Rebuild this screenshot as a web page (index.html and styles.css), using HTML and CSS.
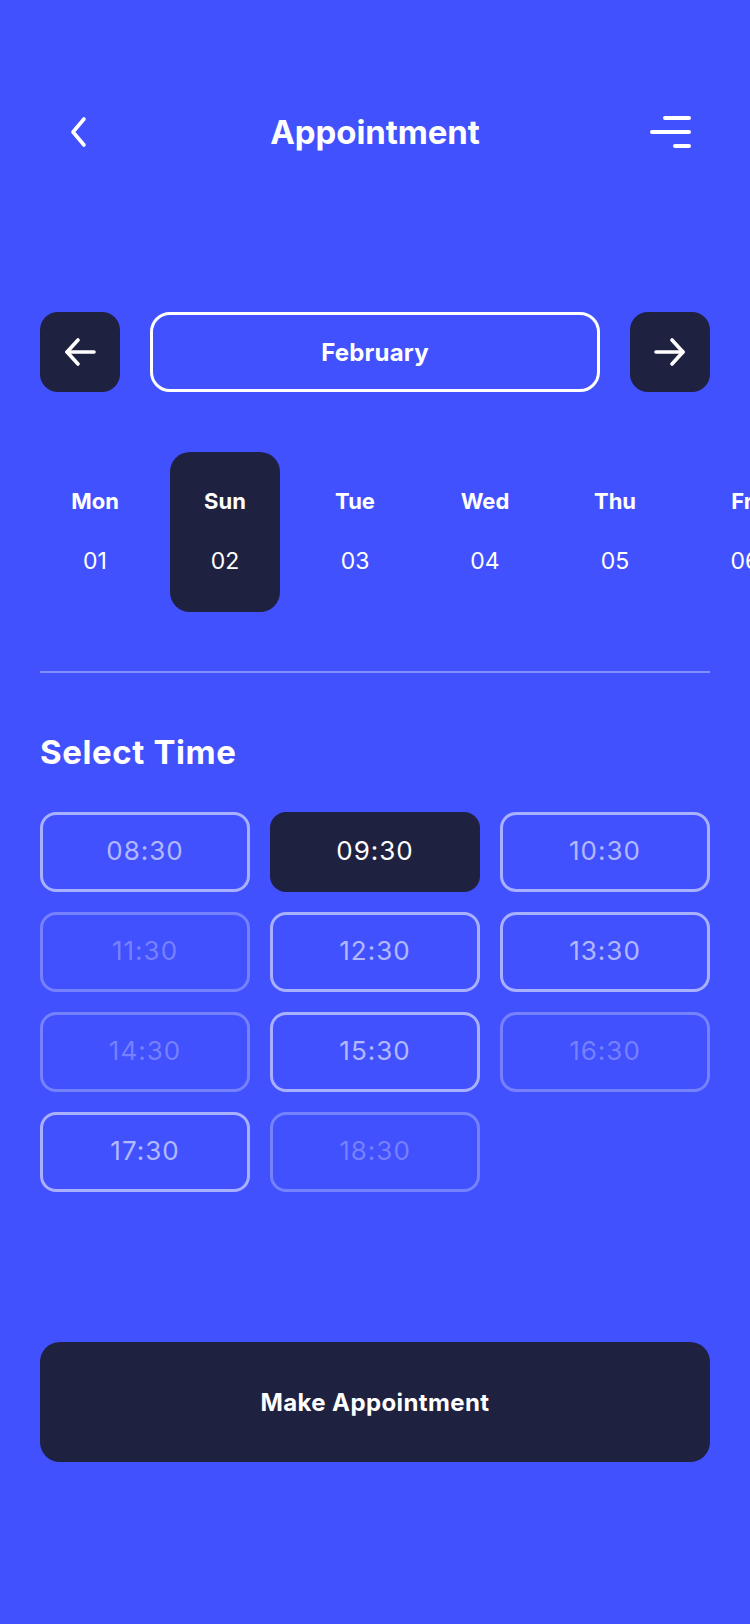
FILE: index.html
```html
<!DOCTYPE html>
<html lang="en">
<head>
<meta charset="utf-8">
<title>Appointment</title>
<link rel="stylesheet" href="styles.css">
</head>
<body>
<div class="screen">
  <header class="topbar">
    <div class="back">
      <svg width="20" height="32" viewBox="0 0 20 32"><polyline points="16,3 5,16 16,29" fill="none" stroke="#fff" stroke-width="3.6" stroke-linecap="round" stroke-linejoin="round"/></svg>
    </div>
    <h1 class="title">Appointment</h1>
    <div class="menu">
      <svg width="44" height="34" viewBox="0 0 44 34"><g stroke="#fff" stroke-width="4" stroke-linecap="round"><line x1="17" y1="3" x2="41" y2="3"/><line x1="4" y1="17" x2="41" y2="17"/><line x1="27" y1="31" x2="41" y2="31"/></g></svg>
    </div>
  </header>

  <section class="month-row">
    <button class="nav-btn">
      <svg width="34" height="30" viewBox="0 0 34 30"><g fill="none" stroke="#fff" stroke-width="3.6" stroke-linecap="round" stroke-linejoin="round"><line x1="4" y1="15" x2="31" y2="15"/><polyline points="15,3 4,15 15,27"/></g></svg>
    </button>
    <div class="month">February</div>
    <button class="nav-btn">
      <svg width="34" height="30" viewBox="0 0 34 30"><g fill="none" stroke="#fff" stroke-width="3.6" stroke-linecap="round" stroke-linejoin="round"><line x1="3" y1="15" x2="30" y2="15"/><polyline points="19,3 30,15 19,27"/></g></svg>
    </button>
  </section>

  <section class="days">
    <div class="day"><span class="dname">Mon</span><span class="dnum">01</span></div>
    <div class="day selected"><span class="dname">Sun</span><span class="dnum">02</span></div>
    <div class="day"><span class="dname">Tue</span><span class="dnum">03</span></div>
    <div class="day"><span class="dname">Wed</span><span class="dnum">04</span></div>
    <div class="day"><span class="dname">Thu</span><span class="dnum">05</span></div>
    <div class="day"><span class="dname">Fri</span><span class="dnum">06</span></div>
  </section>

  <hr class="divider">

  <h2 class="section-title">Select Time</h2>

  <section class="times">
    <div class="slot">08:30</div>
    <div class="slot selected">09:30</div>
    <div class="slot">10:30</div>
    <div class="slot disabled">11:30</div>
    <div class="slot">12:30</div>
    <div class="slot">13:30</div>
    <div class="slot disabled">14:30</div>
    <div class="slot">15:30</div>
    <div class="slot disabled">16:30</div>
    <div class="slot">17:30</div>
    <div class="slot disabled">18:30</div>
  </section>

  <button class="cta">Make Appointment</button>
</div>
</body>
</html>
```

FILE: styles.css
```css
* { box-sizing: border-box; }
html, body {
  margin: 0;
  padding: 0;
  background: #4251fe;
  overflow-x: hidden;
}
body {
  font-family: Inter, "Noto Sans", "Liberation Sans", sans-serif;
  color: #fff;
  width: 750px;
  min-height: 1624px;
}
.screen {
  display: flex;
  flex-direction: column;
  padding: 102px 40px 0 40px;
}
.topbar {
  display: grid;
  grid-template-columns: 1fr auto 1fr;
  align-items: center;
  height: 60px;
}
.back { display: flex; align-items: center; padding-left: 28px; }
.back svg { display: block; }
.menu { display: flex; justify-content: flex-end; padding-right: 18px; }
.menu svg { display: block; }
.title {
  margin: 0;
  font-size: 33px;
  font-weight: 700;
  line-height: 60px;
  letter-spacing: -0.1px;
}
.month-row {
  margin-top: 150px;
  display: flex;
  gap: 30px;
  height: 80px;
}
.nav-btn {
  width: 80px;
  height: 80px;
  border: none;
  border-radius: 18px;
  background: #1f2140;
  display: flex;
  align-items: center;
  justify-content: center;
  padding: 0;
  flex-shrink: 0;
}
.nav-btn svg { display: block; }
.month {
  flex: 1;
  border: 3.5px solid #fff;
  border-radius: 20px;
  display: flex;
  align-items: center;
  justify-content: center;
  font-size: 24px;
  font-weight: 700;
  letter-spacing: 0.2px;
}
.days {
  margin-top: 60px;
  display: flex;
  gap: 20px;
  width: 800px;
}
.day {
  width: 110px;
  height: 160px;
  flex-shrink: 0;
  border-radius: 20px;
  display: flex;
  flex-direction: column;
  align-items: center;
  padding-top: 34px;
}
.day.selected { background: #1f2140; }
.dname {
  font-size: 22px;
  font-weight: 700;
  line-height: 30px;
}
.dnum {
  margin-top: 30px;
  font-size: 23px;
  font-weight: 400;
  line-height: 30px;
}
.divider {
  margin: 59px 0 0 0;
  border: none;
  height: 2px;
  background: rgba(255,255,255,0.35);
}
.section-title {
  margin: 59px 0 0 0;
  font-size: 33px;
  font-weight: 700;
  line-height: 40px;
  letter-spacing: 0.6px;
}
.times {
  margin-top: 40px;
  display: grid;
  grid-template-columns: repeat(3, 210px);
  grid-auto-rows: 80px;
  gap: 20px;
}
.slot {
  border: 3px solid rgba(255,255,255,0.55);
  border-radius: 16px;
  display: flex;
  align-items: center;
  justify-content: center;
  padding-bottom: 4px;
  font-size: 26px;
  font-weight: 400;
  letter-spacing: 1px;
  color: rgba(255,255,255,0.6);
}
.slot.disabled {
  border-color: rgba(255,255,255,0.28);
  color: rgba(255,255,255,0.28);
}
.slot.selected {
  background: #1f2140;
  border-color: #1f2140;
  color: #fff;
}
.cta {
  margin-top: 150px;
  height: 120px;
  border: none;
  border-radius: 20px;
  background: #1f2140;
  color: #fff;
  font-family: inherit;
  font-size: 24px;
  font-weight: 700;
  letter-spacing: 0.4px;
}
```
